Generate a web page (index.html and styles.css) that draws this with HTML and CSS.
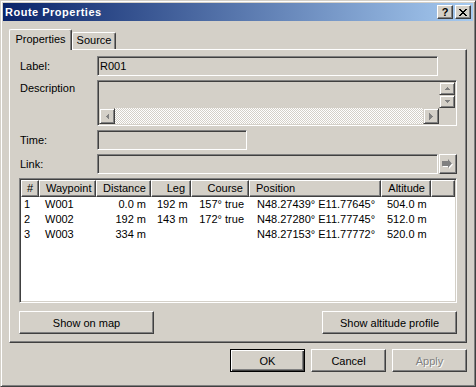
FILE: index.html
```html
<!DOCTYPE html>
<html lang="en">
<head>
    <meta charset="UTF-8">
    <title>Route Properties</title>
    <link rel="stylesheet" href="styles.css">
</head>
<body>
<div class="window">

    <!-- Caption -->
    <div class="titlebar">
        <span class="title">Route Properties</span>
        <div class="cap-buttons">
            <button class="cap-btn">?</button>
            <button class="cap-btn">
                <svg width="8" height="7" viewBox="0 0 8 7"><path fill="#000" d="M0 0h2v1H0zM6 0h2v1H6zM1 1h2v1H1zM5 1h2v1H5zM2 2h4v1H2zM3 3h2v1H3zM2 4h4v1H2zM1 5h2v1H1zM5 5h2v1H5zM0 6h2v1H0zM6 6h2v1H6z"/></svg>
            </button>
        </div>
    </div>

    <div class="dialog">
        <div class="tabs">
            <div class="tab active">Properties</div>
            <div class="tab source">Source</div>
        </div>

        <div class="panel">
            <div class="row">
                <label>Label:</label>
                <div class="field field-label">R001</div>
            </div>

            <div class="row row-top">
                <label>Description</label>
                <div class="memo">
                    <div class="memo-text"></div>
                    <div class="vscroll">
                        <div class="sb-btn sb-v">
                            <svg width="5" height="3" viewBox="0 0 5 3"><path fill="#808080" d="M2 0h1v1H2zM1 1h3v1H1zM0 2h5v1H0z"/></svg>
                        </div>
                        <div class="sb-btn sb-v">
                            <svg width="5" height="3" viewBox="0 0 5 3"><path fill="#808080" d="M0 0h5v1H0zM1 1h3v1H1zM2 2h1v1H2z"/></svg>
                        </div>
                    </div>
                    <div class="hscroll">
                        <div class="sb-btn">
                            <svg width="3" height="5" viewBox="0 0 3 5"><path fill="#808080" d="M2 0h1v5H2zM1 1h1v3H1zM0 2h1v1H0z"/></svg>
                        </div>
                        <div class="track"></div>
                        <div class="sb-btn">
                            <svg width="4" height="7" viewBox="0 0 4 7"><path fill="#808080" d="M0 0h1v7H0zM1 1h1v5H1zM2 2h1v3H2zM3 3h1v1H3z"/></svg>
                        </div>
                    </div>
                    <div class="corner"></div>
                </div>
            </div>

            <div class="row row-time">
                <label>Time:</label>
                <div class="field field-time"></div>
            </div>

            <div class="row">
                <label>Link:</label>
                <div class="field field-label"></div>
                <button class="btn go">
                    <svg width="12" height="10" viewBox="0 0 12 10">
                        <path fill="#fff" d="M1 3h6V1l4 4.5L7 10V8H1z"/>
                        <path fill="#808080" d="M0 2h6V0l4 4.5L6 9V7H0z"/>
                    </svg>
                </button>
            </div>

            <!-- Waypoint list -->
            <div class="listview">
                <div class="lv-head">
                    <div class="c">#</div>
                    <div>Waypoint</div>
                    <div class="r">Distance</div>
                    <div class="r">Leg</div>
                    <div class="r">Course</div>
                    <div>Position</div>
                    <div class="r">Altitude</div>
                    <div></div>
                </div>
                <div class="lv-row">
                    <div class="num">1</div>
                    <div>W001</div>
                    <div class="r">0.0 m</div>
                    <div class="r">192 m</div>
                    <div class="r">157° true</div>
                    <div class="pos">N48.27439° E11.77645°</div>
                    <div class="r">504.0 m</div>
                    <div></div>
                </div>
                <div class="lv-row">
                    <div class="num">2</div>
                    <div>W002</div>
                    <div class="r">192 m</div>
                    <div class="r">143 m</div>
                    <div class="r">172° true</div>
                    <div class="pos">N48.27280° E11.77745°</div>
                    <div class="r">512.0 m</div>
                    <div></div>
                </div>
                <div class="lv-row">
                    <div class="num">3</div>
                    <div>W003</div>
                    <div class="r">334 m</div>
                    <div class="r"></div>
                    <div class="r"></div>
                    <div class="pos">N48.27153° E11.77772°</div>
                    <div class="r">520.0 m</div>
                    <div></div>
                </div>
            </div>

            <div class="panel-buttons">
                <button class="btn wide">Show on map</button>
                <button class="btn wide">Show altitude profile</button>
            </div>
        </div>

        <div class="dialog-buttons">
            <button class="btn default">OK</button>
            <button class="btn">Cancel</button>
            <button class="btn" disabled>Apply</button>
        </div>
    </div>
</div>
</body>
</html>
```

FILE: styles.css
```css
/* Classic Windows dialog */
body {
    margin: 0;
    background-color: #d4d0c8;
    font-family: "Liberation Sans", Arial, sans-serif;
    font-size: 11px;
    color: #000;
}

.window {
    width: 476px;
    height: 387px;
    box-sizing: border-box;
    border: 1px solid;
    border-color: #d4d0c8 #404040 #404040 #d4d0c8;
    box-shadow: inset 1px 1px #fff, inset -1px -1px #808080;
    padding: 2px;
    background-color: #d4d0c8;
}

/* Title bar */
.titlebar {
    height: 18px;
    display: flex;
    align-items: center;
    justify-content: space-between;
    padding: 0 2px 0 2px;
    background: linear-gradient(to right, #0a246a, #a6caf0);
}

.title {
    color: #fff;
    font-weight: bold;
    letter-spacing: 0.5px;
}

.cap-buttons {
    display: flex;
    gap: 2px;
}

.cap-btn {
    width: 16px;
    height: 14px;
    box-sizing: border-box;
    padding: 0;
    display: flex;
    align-items: center;
    justify-content: center;
    background-color: #d4d0c8;
    border: 1px solid;
    border-color: #fff #404040 #404040 #fff;
    box-shadow: inset -1px -1px #808080;
    font-family: "Liberation Sans", Arial, sans-serif;
    font-weight: bold;
    font-size: 11px;
    line-height: 12px;
    color: #000;
}

/* Body */
.dialog {
    padding: 8px 6px 0 6px;
}

.tabs {
    display: flex;
    align-items: flex-end;
    height: 20px;
}

.tab {
    height: 17px;
    box-sizing: border-box;
    border: 1px solid;
    border-bottom: none;
    border-color: #fff #404040 #404040 #fff;
    border-radius: 2px 2px 0 0;
    box-shadow: inset -1px 0 #808080;
    line-height: 15px;
    text-align: center;
    background-color: #d4d0c8;
}

.tab.active {
    width: 63px;
    height: 21px;
    margin-bottom: -1px;
    padding-top: 2px;
    position: relative;
    z-index: 1;
}

.tab.source {
    width: 44px;
}

.panel {
    border: 1px solid;
    border-color: #fff #404040 #404040 #fff;
    box-shadow: inset -1px -1px #808080;
    padding: 6px 9px 8px 9px;
}

.row {
    display: flex;
    align-items: center;
    margin-bottom: 4px;
}

.row-top {
    align-items: flex-start;
}

.row-top label {
    padding-top: 2px;
}

.row-time {
    margin-top: 1px;
}

.row label {
    width: 78px;
    padding-left: 1px;
    box-sizing: border-box;
}

.field {
    height: 20px;
    box-sizing: border-box;
    border: 1px solid;
    border-color: #808080 #fff #fff #808080;
    box-shadow: inset 1px 1px #404040, inset -1px -1px #d4d0c8;
    background-color: #d4d0c8;
    padding: 0 2px;
    line-height: 18px;
}

.field-label {
    width: 341px;
}

.field-time {
    width: 150px;
}

/* Description box with scrollbars */
.memo {
    width: 360px;
    height: 46px;
    box-sizing: border-box;
    border: 1px solid;
    border-color: #808080 #fff #fff #808080;
    box-shadow: inset 1px 1px #404040, inset -1px -1px #d4d0c8;
    padding: 1px;
    display: grid;
    grid-template-columns: 1fr 16px;
    grid-template-rows: 1fr 16px;
}

.vscroll {
    display: flex;
    flex-direction: column;
}

.hscroll {
    display: flex;
}

.track {
    flex: 1;
    background: repeating-conic-gradient(#d4d0c8 0 25%, #fff 0 50%) 0 0 / 2px 2px;
}

.sb-btn {
    width: 16px;
    height: 16px;
    box-sizing: border-box;
    border: 1px solid;
    border-color: #d4d0c8 #404040 #404040 #d4d0c8;
    box-shadow: inset 1px 1px #fff, inset -1px -1px #808080;
    background-color: #d4d0c8;
    display: flex;
    align-items: center;
    justify-content: center;
}

.sb-v {
    height: 13px;
}

.btn {
    width: 75px;
    height: 23px;
    box-sizing: border-box;
    padding: 0;
    background-color: #d4d0c8;
    border: 1px solid;
    border-color: #fff #404040 #404040 #fff;
    box-shadow: inset -1px -1px #808080;
    font-family: "Liberation Sans", Arial, sans-serif;
    font-size: 11px;
    color: #000;
}

.btn.go {
    width: 18px;
    height: 20px;
    margin-left: 1px;
    display: flex;
    align-items: center;
    justify-content: center;
}

.btn.default {
    border-color: #000;
    box-shadow: inset 1px 1px #fff, inset -1px -1px #404040, inset -2px -2px #808080;
}

.btn:disabled {
    color: #808080;
    text-shadow: 1px 1px #fff;
}

/* List view */
.listview {
    margin-top: 4px;
    height: 125px;
    box-sizing: border-box;
    border: 1px solid;
    border-color: #808080 #fff #fff #808080;
    box-shadow: inset 1px 1px #404040, inset -1px -1px #d4d0c8;
    padding: 1px;
    background-color: #fff;
}

.lv-head,
.lv-row {
    display: grid;
    grid-template-columns: 18px 57px 55px 40px 58px 132px 50px 1fr;
}

.lv-head div {
    height: 17px;
    box-sizing: border-box;
    border: 1px solid;
    border-color: #fff #404040 #404040 #fff;
    box-shadow: inset -1px -1px #808080;
    background-color: #d4d0c8;
    line-height: 15px;
    padding: 0 5px 0 6px;
    white-space: nowrap;
    overflow: hidden;
}

.lv-head div.c {
    padding: 0;
}

.lv-row div {
    height: 15px;
    line-height: 15px;
    padding: 0 5px 0 6px;
    white-space: nowrap;
}

.lv-row div.num {
    padding-left: 3px;
}

.lv-row div.pos {
    padding-left: 8px;
}

.c {
    text-align: center;
}

.r {
    text-align: right;
}

.panel-buttons {
    display: flex;
    justify-content: space-between;
    margin-top: 8px;
}

.btn.wide {
    width: 135px;
}

.dialog-buttons {
    display: flex;
    justify-content: flex-end;
    gap: 6px;
    margin-top: 6px;
}
```
